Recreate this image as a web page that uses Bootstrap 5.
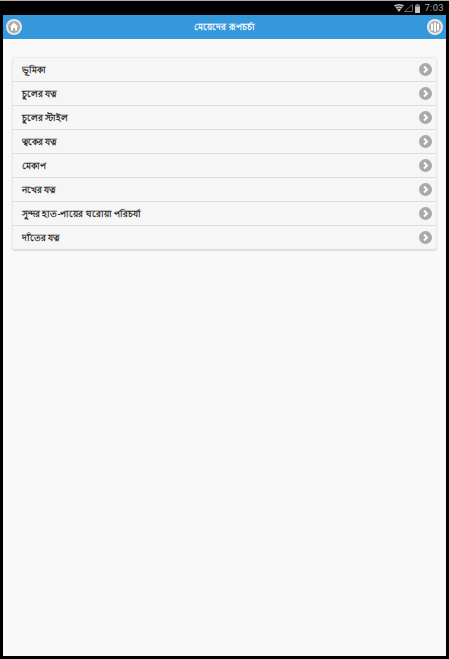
<!DOCTYPE html>
<html lang="bn">
<head>
<meta charset="utf-8">
<title>মেয়েদের রূপচর্চা</title>
<link href="https://cdn.jsdelivr.net/npm/bootstrap@5.3.0/dist/css/bootstrap.min.css" rel="stylesheet">
<style>
html,body{height:100%;background:#000;overflow:hidden}
body{font-family:"Noto Sans","Liberation Sans","DejaVu Sans",sans-serif;display:flex;flex-direction:column;height:659px;border-top:1px solid #aaa}
.stat-bar{height:14px;padding-right:5px;color:#a8a8a8;font-size:9.5px;line-height:14px;font-family:"Roboto",sans-serif;letter-spacing:.3px}
.stat-gap{width:4px;flex:none}
.stat-batt{margin-left:2px}
.screen-area{margin:0 3px 3px 3px;background:#f9f9f9;flex:1 1 auto;min-height:0}
.top-head{height:24px;background:#3498db;color:#fff;padding:0 3px}
.top-head .head-title{font-size:9.1px;font-weight:600;line-height:24px}
.round-ico{width:16px;height:16px;flex:none;display:block}
.menu-wrap{margin:18px 9px 0 9px;background:#f6f6f6;border:1px solid #e9e9e9;border-bottom-color:#ddd;border-radius:4px;box-shadow:0 1px 2px rgba(0,0,0,.12);overflow:hidden}
.menu-row{height:24px;padding:0 4px 0 9px;color:#2a2a2a;font-size:9.4px;font-weight:600;background:#f6f6f6;border:0;border-bottom:1px solid #ddd;border-radius:0!important}
.menu-row>span{padding-top:1px}
.menu-row:last-child{border-bottom:0;height:23px}
.chev-ico{width:13px;height:13px;flex:none;display:block}
</style>
</head>
<body>
<div class="stat-bar d-flex align-items-center justify-content-end">
  <svg width="10" height="8" viewBox="0 0 10 8"><path d="M0 1 L5 0 L10 1 L5 8Z" fill="#c4c4c4"/><path d="M1.8 2.6 Q5 1.2 8.2 2.6" stroke="#000" fill="none" stroke-width=".8"/><path d="M3.4 4.6 Q5 3.8 6.6 4.6" stroke="#000" fill="none" stroke-width=".8"/></svg>
  <svg width="9" height="8" viewBox="0 0 9 8"><path d="M0.5 7.5 L8.5 0.5 V7.5Z" fill="none" stroke="#666"/></svg>
  <svg class="stat-batt" width="5" height="9" viewBox="0 0 5 9"><rect x="1.5" y="0" width="2" height="1" fill="#888"/><rect x="0" y="1" width="5" height="2" fill="#777"/><rect x="0" y="3" width="5" height="6" fill="#c4c4c4"/></svg>
  <span class="stat-gap"></span>
  <span>7:03</span>
</div>
<div class="screen-area d-flex flex-column">
  <header class="top-head d-flex align-items-center justify-content-between">
    <svg class="round-ico" viewBox="0 0 16 16"><circle cx="8" cy="8" r="8" fill="#e6e6e6"/><circle cx="8" cy="8" r="6" fill="#a9a9a9"/><path d="M8 3.6 L12.2 7.8 H11 V11.6 H9 V9 H7 V11.6 H5 V7.8 H3.8Z" fill="#fff"/></svg>
    <span class="head-title">মেয়েদের রূপচর্চা</span>
    <svg class="round-ico" viewBox="0 0 16 16"><circle cx="8" cy="8" r="8" fill="#ececec"/><circle cx="8" cy="8" r="6" fill="#a9a9a9"/><path d="M4 4.5h2v7H4zM7 3.5h2v9H7zM10 4.5h2v7h-2z" fill="#fff"/></svg>
  </header>
  <div class="menu-wrap list-group">
    <a href="#" class="menu-row list-group-item d-flex align-items-center justify-content-between text-decoration-none"><span>ভূমিকা</span><svg class="chev-ico" viewBox="0 0 13 13"><circle cx="6.5" cy="6.5" r="6.5" fill="#a9a9a9"/><path d="M5 3.5 L8 6.5 L5 9.5" fill="none" stroke="#fff" stroke-width="2"/></svg></a>
    <a href="#" class="menu-row list-group-item d-flex align-items-center justify-content-between text-decoration-none"><span>চুলের যত্ন</span><svg class="chev-ico" viewBox="0 0 13 13"><circle cx="6.5" cy="6.5" r="6.5" fill="#a9a9a9"/><path d="M5 3.5 L8 6.5 L5 9.5" fill="none" stroke="#fff" stroke-width="2"/></svg></a>
    <a href="#" class="menu-row list-group-item d-flex align-items-center justify-content-between text-decoration-none"><span>চুলের স্টাইল</span><svg class="chev-ico" viewBox="0 0 13 13"><circle cx="6.5" cy="6.5" r="6.5" fill="#a9a9a9"/><path d="M5 3.5 L8 6.5 L5 9.5" fill="none" stroke="#fff" stroke-width="2"/></svg></a>
    <a href="#" class="menu-row list-group-item d-flex align-items-center justify-content-between text-decoration-none"><span>ত্বকের যত্ন</span><svg class="chev-ico" viewBox="0 0 13 13"><circle cx="6.5" cy="6.5" r="6.5" fill="#a9a9a9"/><path d="M5 3.5 L8 6.5 L5 9.5" fill="none" stroke="#fff" stroke-width="2"/></svg></a>
    <a href="#" class="menu-row list-group-item d-flex align-items-center justify-content-between text-decoration-none"><span>মেকাপ</span><svg class="chev-ico" viewBox="0 0 13 13"><circle cx="6.5" cy="6.5" r="6.5" fill="#a9a9a9"/><path d="M5 3.5 L8 6.5 L5 9.5" fill="none" stroke="#fff" stroke-width="2"/></svg></a>
    <a href="#" class="menu-row list-group-item d-flex align-items-center justify-content-between text-decoration-none"><span>নখের যত্ন</span><svg class="chev-ico" viewBox="0 0 13 13"><circle cx="6.5" cy="6.5" r="6.5" fill="#a9a9a9"/><path d="M5 3.5 L8 6.5 L5 9.5" fill="none" stroke="#fff" stroke-width="2"/></svg></a>
    <a href="#" class="menu-row list-group-item d-flex align-items-center justify-content-between text-decoration-none"><span>সুন্দর হাত-পায়ের ঘরোয়া পরিচর্যা</span><svg class="chev-ico" viewBox="0 0 13 13"><circle cx="6.5" cy="6.5" r="6.5" fill="#a9a9a9"/><path d="M5 3.5 L8 6.5 L5 9.5" fill="none" stroke="#fff" stroke-width="2"/></svg></a>
    <a href="#" class="menu-row list-group-item d-flex align-items-center justify-content-between text-decoration-none"><span>দাঁতের যত্ন</span><svg class="chev-ico" viewBox="0 0 13 13"><circle cx="6.5" cy="6.5" r="6.5" fill="#a9a9a9"/><path d="M5 3.5 L8 6.5 L5 9.5" fill="none" stroke="#fff" stroke-width="2"/></svg></a>
  </div>
</div>
<script src="https://cdn.jsdelivr.net/npm/bootstrap@5.3.0/dist/js/bootstrap.bundle.min.js"></script>
</body>
</html>
